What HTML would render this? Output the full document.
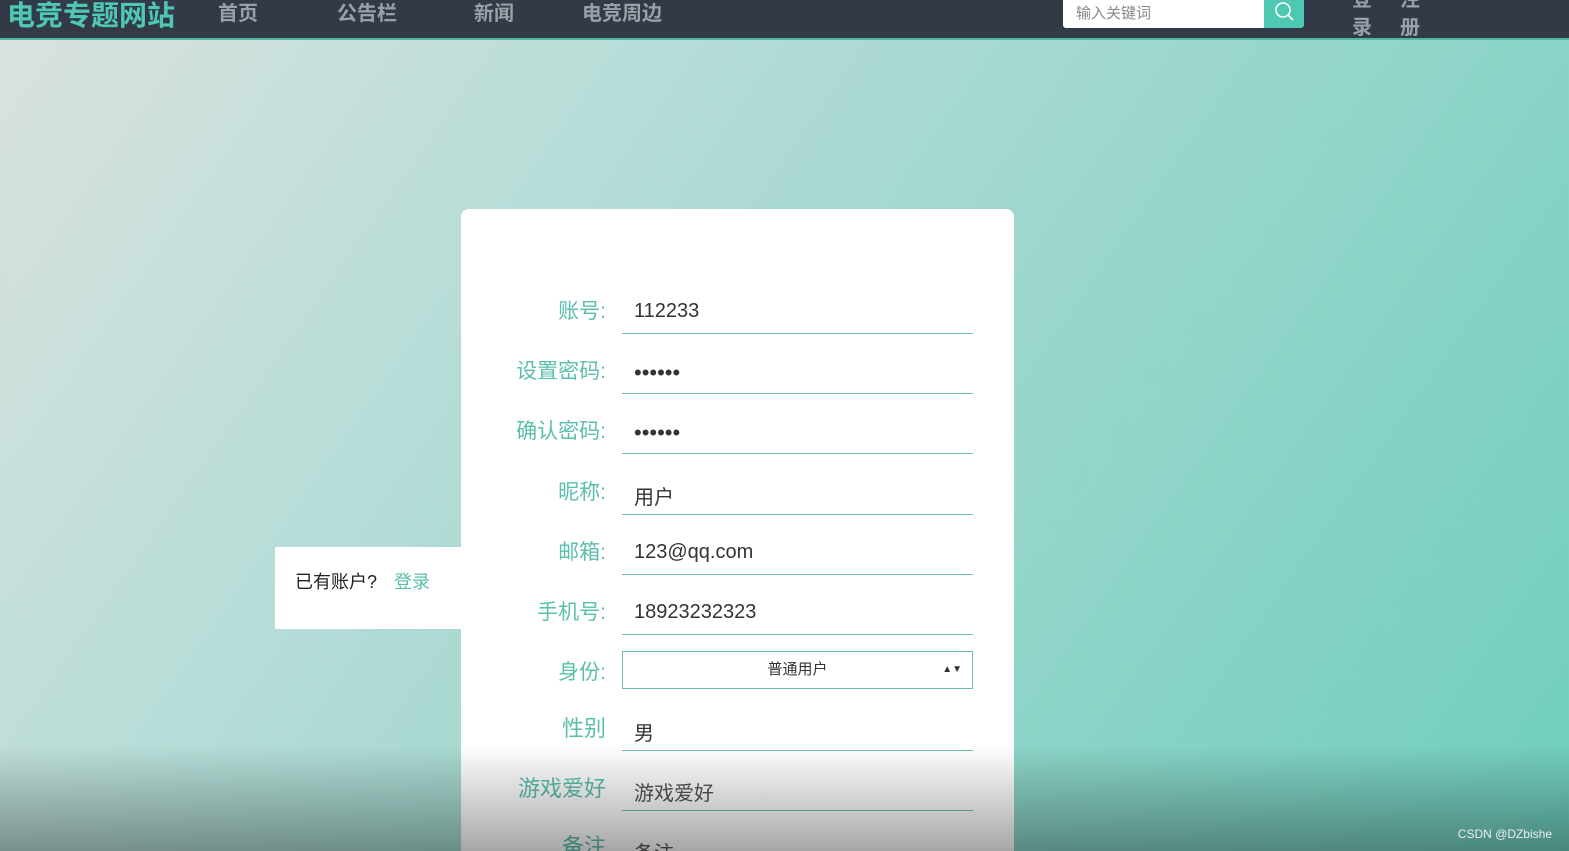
<!DOCTYPE html>
<html style="width:1569px;height:851px;overflow:hidden"><head><meta charset="utf-8"><style>
*{margin:0;padding:0;box-sizing:border-box}
body{width:1569px;height:851px;overflow:hidden;position:relative;font-family:"Liberation Sans","Noto Sans CJK SC",sans-serif;background:linear-gradient(125deg,#dbe2df 0%,#b9ddd8 30%,#98d6cb 60%,#6fcebe 100%)}
.nav{position:absolute;left:0;top:0;width:1569px;height:40px;background:#313a46;border-bottom:2px solid #4fb5a5}
.nav span{position:absolute;font-weight:bold;white-space:nowrap}
.logo{left:7px;top:-6px;font-size:28px;color:#4fc8b2}
.ni{top:-3px;font-size:20px;color:#9ba0a8}
.search{position:absolute;left:1063px;top:-4px;width:201px;height:32px;background:#fff;border-radius:0 0 0 3px;font-size:15px;color:#888;padding:6px 13px}
.sbtn{position:absolute;left:1264px;top:-4px;width:40px;height:32px;background:#4fc8b2;border-radius:0 0 3px 0}
.card{position:absolute;left:461px;top:209px;width:553px;height:642px;background:#fff;border-radius:8px 8px 0 0}
.side{position:absolute;left:275px;top:547px;width:186px;height:82px;background:#fff;font-size:18px;padding:21px 20px;color:#222}
.side b{font-weight:normal;color:#5bbfae;margin-left:12px}
.lab{position:absolute;right:963px;font-size:21px;color:#5bbfae;text-align:right;white-space:nowrap}
.inp{position:absolute;left:622px;width:351px;height:44px;border-bottom:1.5px solid #6bbfb5;font-size:20px;color:#333;padding:10px 12px 0}
.sel{position:absolute;left:622px;top:651px;width:351px;height:38px;border:1.5px solid #6bbfb5;font-size:15px;color:#333;text-align:center;line-height:35px}
.shade{position:absolute;left:0;top:745px;width:1569px;height:106px;background:linear-gradient(rgba(0,0,0,0),rgba(0,0,0,0.35))}
</style></head><body>
<div class="nav">
<span class="logo">电竞专题网站</span>
<span class="ni" style="left:218px">首页</span>
<span class="ni" style="left:337px">公告栏</span>
<span class="ni" style="left:474px">新闻</span>
<span class="ni" style="left:582px">电竞周边</span>
<div class="search">输入关键词</div>
<div class="sbtn"><svg width="40" height="32" viewBox="0 0 40 32"><circle cx="19" cy="14" r="7" fill="none" stroke="#fff" stroke-width="1.6"/><line x1="24" y1="19" x2="29" y2="24" stroke="#fff" stroke-width="1.8"/></svg></div>
<span class="ni" style="left:1352px;top:-14px;font-size:20px;line-height:28px">登<br>录</span>
<span class="ni" style="left:1400px;top:-14px;font-size:20px;line-height:28px">注<br>册</span>
</div>
<div class="side">已有账户? <b>登录</b></div>
<div class="card"></div>
<div class="lab" style="top:295px">账号:</div><div class="inp" style="top:290px">112233</div>
<div class="lab" style="top:355px">设置密码:</div><div class="inp" style="top:350px;font-size:22px">••••••</div>
<div class="lab" style="top:415px">确认密码:</div><div class="inp" style="top:410px;font-size:22px">••••••</div>
<div class="lab" style="top:476px">昵称:</div><div class="inp" style="top:471px">用户</div>
<div class="lab" style="top:536px">邮箱:</div><div class="inp" style="top:531px">123@qq.com</div>
<div class="lab" style="top:596px">手机号:</div><div class="inp" style="top:591px">18923232323</div>
<div class="lab" style="top:656px">身份:</div><div class="sel">普通用户<span style="position:absolute;right:10px;font-size:10px">▲▼</span></div>
<div class="lab" style="top:711px;font-size:22px">性别</div><div class="inp" style="top:707px">男</div>
<div class="lab" style="top:771px;font-size:22px">游戏爱好</div><div class="inp" style="top:767px;color:#555">游戏爱好</div>
<div class="lab" style="top:829px;font-size:22px">备注</div><div class="inp" style="top:827px;color:#555;border:none">备注</div>
<div class="shade"></div>
<div style="position:absolute;right:17px;top:827px;font-size:12px;color:#eee">CSDN @DZbishe</div>
</body></html>
